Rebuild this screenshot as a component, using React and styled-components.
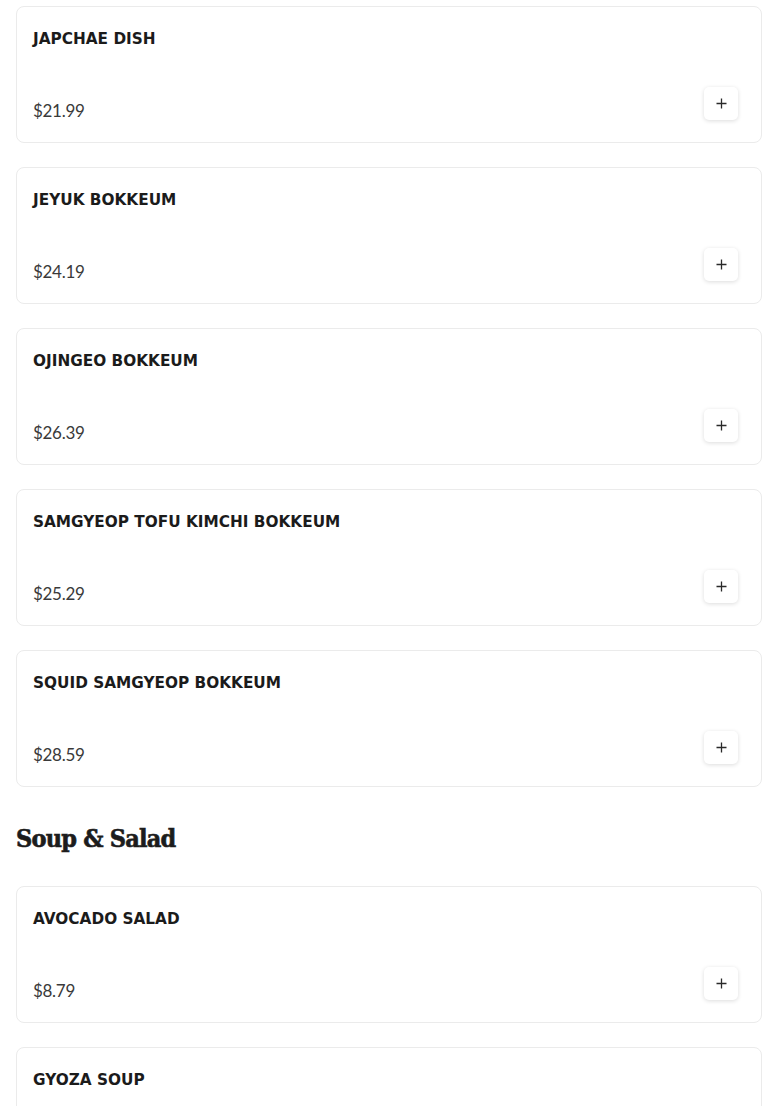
import React from "react";
import styled, { createGlobalStyle } from "styled-components";

const Global = createGlobalStyle`
  html, body { margin: 0; padding: 0; background: #ffffff; }
  body { font-family: "Inter", "Liberation Sans", sans-serif; color: #1a1a1a; }
  * { box-sizing: border-box; }
`;

const Page = styled.main`
  padding: 6px 16px 0;
  display: flex;
  flex-direction: column;
`;

const Section = styled.section`
  display: flex;
  flex-direction: column;
  gap: 24px;
`;

const SectionTitle = styled.h2`
  margin: 26px 0 21px;
  font-family: "DejaVu Serif Condensed", "DejaVu Serif", "Liberation Serif", serif;
  font-stretch: condensed;
  font-weight: 900;
  font-size: 25px;
  line-height: 52px;
  letter-spacing: -0.8px;
  -webkit-text-stroke: 0.6px #1c1c1c;
  color: #1c1c1c;
`;

const Card = styled.article`
  border: 1px solid #ebebeb;
  border-radius: 8px;
  background: #fff;
  height: 137px;
  padding: 22px 16px 0;
  display: flex;
  flex-direction: column;
  justify-content: space-between;
`;

const Name = styled.h3`
  margin: 0;
  font-family: "DejaVu Sans", "Liberation Sans", sans-serif;
  font-weight: 700;
  font-size: 15.3px;
  line-height: 20px;
  letter-spacing: 0;
  color: #1b1b1b;
`;

const Bottom = styled.div`
  display: flex;
  align-items: flex-start;
  justify-content: space-between;
  padding-bottom: 20px;
  padding-right: 7px;
`;

const Price = styled.span`
  margin-top: 13px;
  font-family: "Lato", "Liberation Sans", sans-serif;
  font-size: 17px;
  line-height: 22px;
  letter-spacing: -0.3px;
  color: #3a3a3a;
`;

const AddButton = styled.button`
  width: 34px;
  height: 33px;
  border: none;
  border-radius: 5px;
  background: #fff;
  box-shadow: 0 1px 4px rgba(0, 0, 0, 0.14);
  display: flex;
  align-items: center;
  justify-content: center;
  padding: 0;
  cursor: pointer;
`;

const PlusIcon = () => (
  <svg width="11" height="11" viewBox="0 0 11 11">
    <path d="M5.5 0.5v10M0.5 5.5h10" stroke="#2a2a2a" strokeWidth="1.3" />
  </svg>
);

const Item = ({ name, price }) => (
  <Card>
    <Name>{name}</Name>
    <Bottom>
      <Price>{price}</Price>
      <AddButton aria-label={`Add ${name}`}>
        <PlusIcon />
      </AddButton>
    </Bottom>
  </Card>
);

const first = [
  ["JAPCHAE DISH", "$21.99"],
  ["JEYUK BOKKEUM", "$24.19"],
  ["OJINGEO BOKKEUM", "$26.39"],
  ["SAMGYEOP TOFU KIMCHI BOKKEUM", "$25.29"],
  ["SQUID SAMGYEOP BOKKEUM", "$28.59"],
];

const soup = [
  ["AVOCADO SALAD", "$8.79"],
  ["GYOZA SOUP", "$9.89"],
];

export default function App() {
  return (
    <>
      <Global />
      <Page>
        <Section>
          {first.map(([n, p]) => (
            <Item key={n} name={n} price={p} />
          ))}
        </Section>
        <SectionTitle>Soup &amp; Salad</SectionTitle>
        <Section>
          {soup.map(([n, p]) => (
            <Item key={n} name={n} price={p} />
          ))}
        </Section>
      </Page>
    </>
  );
}
